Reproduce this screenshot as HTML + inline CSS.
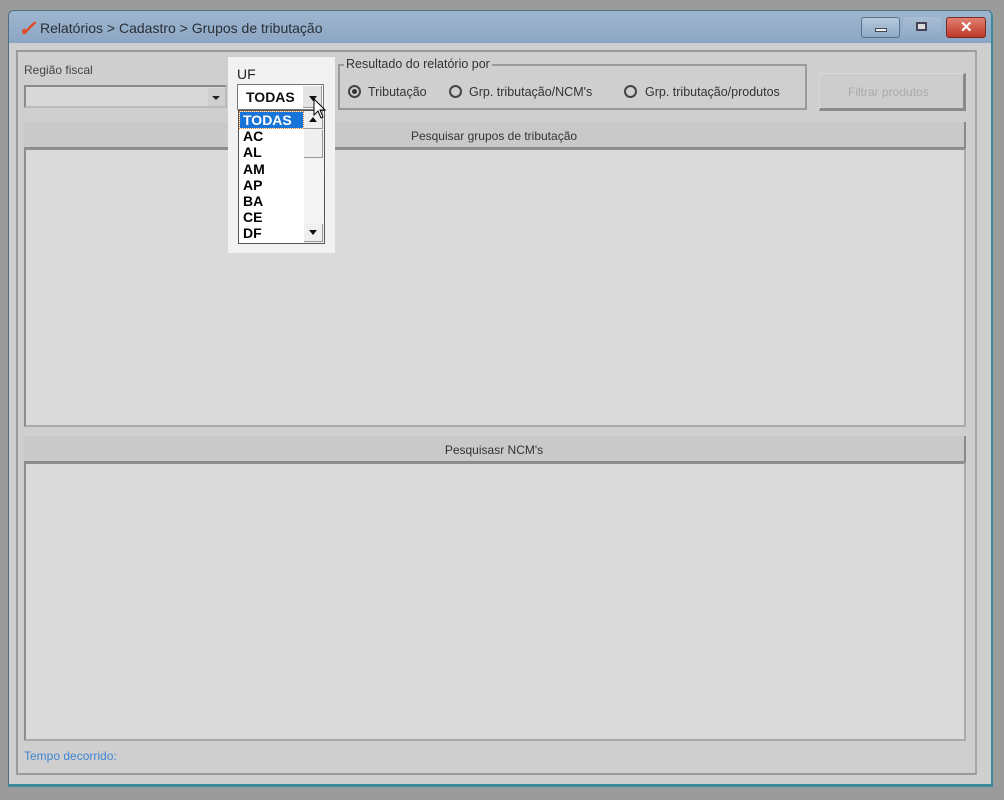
<!DOCTYPE html>
<html><head><meta charset="utf-8"><style>
body{margin:0;width:1004px;height:800px;background:#9b9b9b;position:relative;overflow:hidden;font-family:"Liberation Sans",sans-serif;font-size:12px;color:#333}
div{position:absolute;box-sizing:border-box}
.t{white-space:nowrap}
</style></head><body>
<div style="left:8px;top:10px;width:985px;height:777px;background:#cfcfcf;border:1px solid #4d6f80;border-bottom:3px solid #3d8a9c;border-right:2px solid #3d8a9c;border-radius:6px 6px 0 0"></div>
<div style="left:9px;top:11px;width:982px;height:32px;background:linear-gradient(#9fb6cf,#8ba6c4);border-radius:5px 5px 0 0"></div>
<div class="t" style="left:18px;top:16px;font-size:22px;color:#e0482a;font-weight:bold;font-style:italic">✓</div>
<div class="t" style="left:40px;top:20px;font-size:14px;color:#2a2f36">Relatórios &gt; Cadastro &gt; Grupos de tributação</div>
<div style="left:861px;top:17px;width:39px;height:21px;border:1px solid #5a7190;border-radius:3px;background:linear-gradient(#b7c9dc,#8ea9c6)"><div style="left:13px;top:10px;width:12px;height:4px;background:#f2f2f2;border:1px solid #445"></div></div>
<div style="left:903px;top:17px;width:38px;height:21px;border-radius:3px;background:linear-gradient(#a9bdd4,#8ea9c6)"><div style="left:13px;top:5px;width:11px;height:9px;border:2px solid #445;background:#ddd"></div></div>
<div style="left:946px;top:17px;width:40px;height:21px;border:1px solid #7a2a20;border-radius:3px;background:linear-gradient(#e08070,#c0382a)"><div class="t" style="left:13px;top:0px;color:#fff;font-weight:bold;font-size:15px">✕</div></div>
<div style="left:16px;top:50px;width:961px;height:725px;border:2px solid #9a9a9a;border-right-color:#a5a5a5;background:#cfcfcf"></div>
<div class="t" style="left:24px;top:63px;color:#444">Região fiscal</div>
<div style="left:24px;top:85px;width:203px;height:23px;border:2px solid #8a8a8a;border-right-color:#bbb;border-bottom-color:#bbb;background:#d8d8d8"><div style="left:182px;top:1px;width:17px;height:18px;background:#cfcfcf"></div><div style="left:186px;top:9px;border:4px solid transparent;border-top:4px solid #222"></div></div>
<div style="left:338px;top:64px;width:469px;height:46px;border:2px solid #9a9a9a"></div>
<div class="t" style="left:344px;top:57px;background:#cfcfcf;padding:0 2px;color:#333;font-size:12.5px">Resultado do relatório por</div>
<div style="left:348px;top:85px;width:13px;height:13px;border:2px solid #444;border-radius:50%"><div style="left:2px;top:2px;width:5px;height:5px;background:#333;border-radius:50%"></div></div>
<div class="t" style="left:368px;top:85px;font-size:12.5px">Tributação</div>
<div style="left:449px;top:85px;width:13px;height:13px;border:2px solid #444;border-radius:50%"></div>
<div class="t" style="left:469px;top:85px;font-size:12.5px">Grp. tributação/NCM's</div>
<div style="left:624px;top:85px;width:13px;height:13px;border:2px solid #444;border-radius:50%"></div>
<div class="t" style="left:645px;top:85px;font-size:12.5px">Grp. tributação/produtos</div>
<div style="left:819px;top:73px;width:147px;height:38px;border:1px solid #d8d8d8;border-right:3px solid #8a8a8a;border-bottom:3px solid #8a8a8a;background:#cdcdcd"><div class="t" style="left:28px;top:11px;color:#aaa">Filtrar produtos</div></div>
<div style="left:24px;top:122px;width:942px;height:27px;background:#c9c9c9;border-right:2px solid #8a8a8a;border-bottom:2px solid #8a8a8a"><div class="t" style="left:0;width:100%;text-align:center;top:7px">Pesquisar grupos de tributação</div></div>
<div style="left:24px;top:148px;width:942px;height:279px;background:#dadada;border:2px solid #8e8e8e;border-right-color:#aaa;border-bottom-color:#aaa"></div>
<div style="left:24px;top:436px;width:942px;height:27px;background:#c9c9c9;border-right:2px solid #8a8a8a;border-bottom:2px solid #8a8a8a"><div class="t" style="left:0;width:100%;text-align:center;top:7px">Pesquisasr NCM's</div></div>
<div style="left:24px;top:462px;width:942px;height:279px;background:#dadada;border:2px solid #8e8e8e;border-right-color:#aaa;border-bottom-color:#aaa"></div>
<div class="t" style="left:24px;top:749px;color:#3f84cf">Tempo decorrido:</div>
<div style="left:228px;top:57px;width:107px;height:196px;background:#f2f2f2"></div>
<div class="t" style="left:237px;top:66px;font-size:14px;color:#222">UF</div>
<div style="left:237px;top:84px;width:87px;height:26px;border:1px solid #777;background:#fff"><div class="t" style="left:8px;top:4px;font-size:14px;font-weight:bold;color:#111">TODAS</div><div style="left:65px;top:1px;width:19px;height:22px;background:#e4e4e4;border-right:1px solid #999;border-bottom:1px solid #999"></div><div style="left:71px;top:11px;border:4px solid transparent;border-top:5px solid #111"></div></div>
<div style="left:238px;top:110px;width:87px;height:134px;border:1px solid #555;background:#fff"></div>
<div style="left:240px;top:112px;width:63px;height:16px;background:#1874d8;outline:1px dotted #e08030"></div>
<div style="left:243px;top:112px;font-size:14px;font-weight:bold;line-height:16.2px;color:#000"><span style="color:#fff">TODAS</span><br>AC<br>AL<br>AM<br>AP<br>BA<br>CE<br>DF</div>
<div style="left:304px;top:111px;width:20px;height:132px;background:#f4f4f4;background-image:repeating-linear-gradient(45deg,#eee 0 1px,#fafafa 1px 2px)"></div>
<div style="left:304px;top:111px;width:19px;height:18px;background:#efefef;border-right:1px solid #999;border-bottom:1px solid #999"><div style="left:5px;top:2px;border:4px solid transparent;border-bottom:5px solid #111"></div></div>
<div style="left:304px;top:130px;width:19px;height:28px;background:#efefef;border-right:1px solid #999;border-bottom:1px solid #999"></div>
<div style="left:304px;top:224px;width:19px;height:18px;background:#efefef;border-right:1px solid #999;border-bottom:1px solid #999"><div style="left:5px;top:6px;border:4px solid transparent;border-top:5px solid #111"></div></div>
<svg style="position:absolute;left:313px;top:98px" width="14" height="22" viewBox="0 0 14 22"><path d="M1 1 L1 17 L5 13 L8 20 L10 19 L7 12 L12 12 Z" fill="#fff" stroke="#000" stroke-width="1"/></svg>
</body></html>
